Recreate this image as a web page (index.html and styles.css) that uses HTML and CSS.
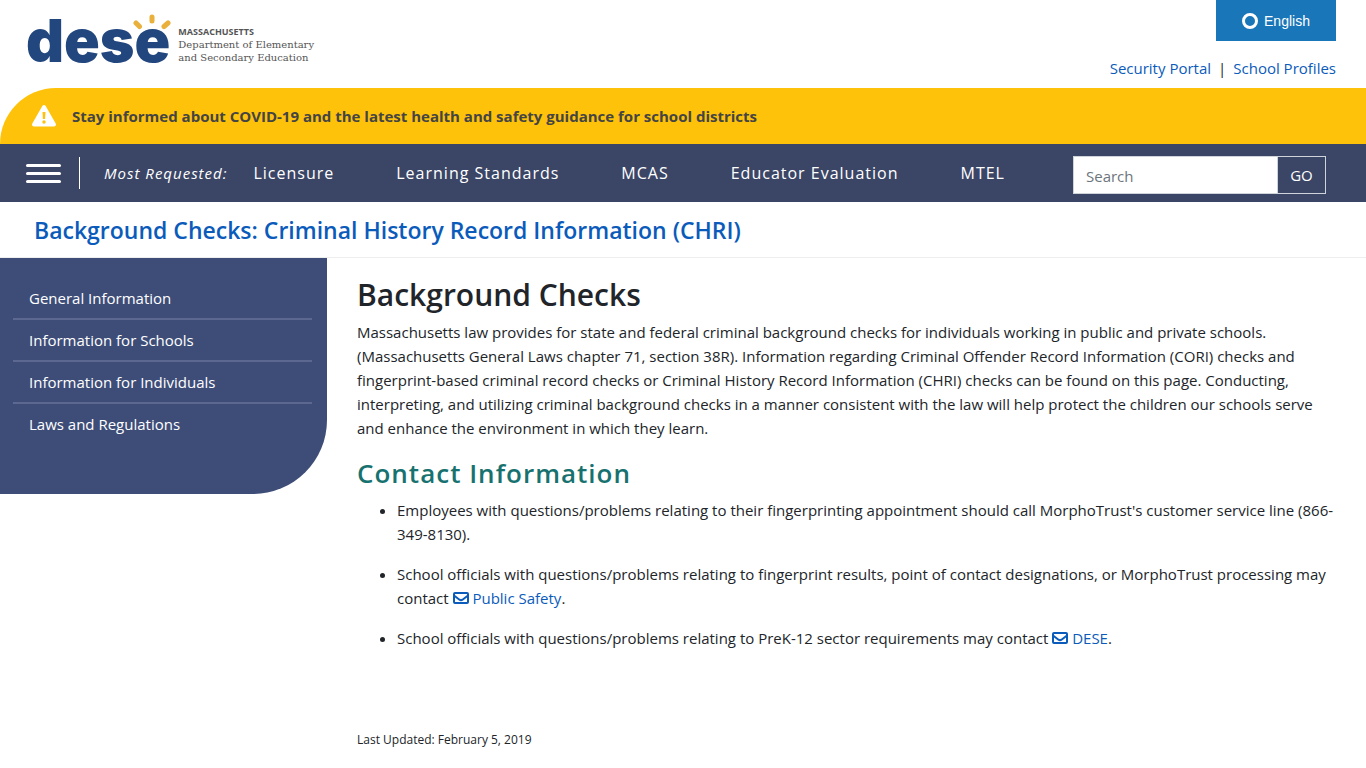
FILE: index.html
```html
<!DOCTYPE html>
<html lang="en">
<head>
<meta charset="utf-8">
<meta name="viewport" content="width=device-width, initial-scale=1">
<title>Background Checks: Criminal History Record Information (CHRI)</title>
<link rel="stylesheet" href="styles.css">
</head>
<body>
<header class="header">
  <a class="logo" href="#">
    <span class="logo-word">dese
      <svg class="logo-rays" viewBox="0 0 38 16" aria-hidden="true"><g stroke="#eab03c" stroke-width="5" stroke-linecap="round"><path d="M3 9l3.500 3.500M19 3v4M35 9l-4 3.500"/></g></svg>
    </span>
    <span class="logo-text"><strong class="logo-state">MASSACHUSETTS</strong><span>Department of Elementary</span><span>and Secondary Education</span></span>
  </a>
  <div class="header-side">
    <button class="language" type="button"><span class="ring"></span>English</button>
    <nav class="portal-links" aria-label="Portals"><a href="#">Security Portal</a><span>|</span><a href="#">School Profiles</a></nav>
  </div>
</header>
<div class="alert">
  <svg class="alert-icon" viewBox="0 0 24 22" aria-hidden="true"><path fill="#fff" d="M10.300 1c.8-1.300 2.600-1.300 3.400 0l10 17.500c.8 1.400-.2 3-1.700 3H2c-1.500 0-2.500-1.600-1.700-3z"/><path fill="#ffc20a" d="M10.500 7h3l-.4 7h-2.200z"/><circle cx="12" cy="17" r="1.700" fill="#ffc20a"/></svg>
  <a class="alert-link" href="#">Stay informed about COVID-19 and the latest health and safety guidance for school districts</a>
</div>
<div class="navbar">
  <button class="menu" type="button" aria-label="Menu"><span></span><span></span><span></span></button>
  <em class="requested">Most Requested:</em>
  <nav class="nav-links" aria-label="Most requested"><a href="#">Licensure</a><a href="#">Learning Standards</a><a href="#">MCAS</a><a href="#">Educator Evaluation</a><a href="#">MTEL</a></nav>
  <form class="search"><input class="search-box" type="text" placeholder="Search" aria-label="Search"><button class="go" type="button">GO</button></form>
</div>
<div class="section-title"><a href="#">Background Checks: Criminal History Record Information (CHRI)</a></div>
<div class="layout">
  <nav class="sidebar" aria-label="Section">
    <a href="#">General Information</a>
    <a href="#">Information for Schools</a>
    <a href="#">Information for Individuals</a>
    <a href="#">Laws and Regulations</a>
  </nav>
  <main class="content">
    <h1>Background Checks</h1>
    <p class="intro">Massachusetts law provides for state and federal criminal background checks for individuals working in public and private schools. (Massachusetts General Laws chapter 71, section 38R). Information regarding Criminal Offender Record Information (CORI) checks and fingerprint-based criminal record checks or Criminal History Record Information (CHRI) checks can be found on this page. Conducting, interpreting, and utilizing criminal background checks in a manner consistent with the law will help protect the children our schools serve and enhance the environment in which they learn.</p>
    <h2>Contact Information</h2>
    <ul class="contacts">
      <li>Employees with questions/problems relating to their fingerprinting appointment should call MorphoTrust's customer service line (866-349-8130).</li>
      <li>School officials with questions/problems relating to fingerprint results, point of contact designations, or MorphoTrust processing may contact <a href="#"><svg class="mail" viewBox="0 0 16 12" aria-hidden="true"><rect x="1" y="1" width="14" height="10" rx="1"/><path d="M1 3.500l5.500 4.200q1.500 1 3 0L15 3.500"/></svg> Public Safety</a>.</li>
      <li>School officials with questions/problems relating to PreK-12 sector requirements may contact <a href="#"><svg class="mail" viewBox="0 0 16 12" aria-hidden="true"><rect x="1" y="1" width="14" height="10" rx="1"/><path d="M1 3.500l5.500 4.200q1.500 1 3 0L15 3.500"/></svg> DESE</a>.</li>
    </ul>
    <p class="updated">Last Updated: February 5, 2019</p>
  </main>
</div>
</body>
</html>
```
FILE: styles.css
```css
* { box-sizing: border-box; }
body { margin: 0; background: #fff; color: #212529; font: 15px/24px "Open Sans", "Noto Sans", sans-serif; }
a { color: #0b5bbb; text-decoration: none; }
button { font: inherit; cursor: pointer; }

.header { display: flex; justify-content: space-between; height: 88px; padding: 0 30px 0 26px; }
.logo { display: flex; gap: 8px; color: #555; }
.logo-word { position: relative; height: 82px; color: #22477f; font: 900 59px/82px Inter, sans-serif; }
.logo-rays { position: absolute; right: -1px; top: 14px; width: 38px; height: 16px; fill: none; }
.logo-text { display: flex; flex-direction: column; padding-top: 25px; font: 10px/13px "DejaVu Serif", serif; }
.logo-state { font: 700 9px/13px "Open Sans", sans-serif; }
.header-side { display: flex; flex-direction: column; align-items: flex-end; gap: 15px; }
.language { display: flex; align-items: center; justify-content: center; gap: 6px; width: 120px; height: 41px; padding: 0; border: 0; background: #1976b9; color: #fff; font: 14px/20px "Liberation Sans", Arial, sans-serif; }
.ring { width: 16px; height: 16px; border: 3px solid #fff; border-radius: 50%; }
.portal-links { display: flex; gap: 7px; }

.alert { display: flex; align-items: center; gap: 16px; height: 56px; padding: 0 32px; background: #ffc20a; border-top-left-radius: 56px; }
.alert-icon { width: 24px; height: 22px; }
.alert-link { color: #444; font-weight: 700; }

.navbar { display: flex; align-items: center; height: 58px; padding: 0 40px 0 26px; background: #3b4566; color: #fff; letter-spacing: 1px; }
.menu { display: flex; flex-direction: column; justify-content: center; gap: 5px; width: 54px; height: 32px; padding: 0 18px 0 0; border: 0; border-right: 1px solid #fff; background: none; }
.menu span { height: 3px; border-radius: 2px; background: #fff; }
.requested { margin: 0 26px 0 24px; }
.nav-links { display: flex; gap: 62px; font-size: 16px; }
.nav-links a { color: #fff; }
.search { display: flex; width: 253px; height: 38px; margin: 4px 0 0 auto; letter-spacing: normal; }
.search-box { flex: 1; min-width: 0; padding: 2px 12px 0; border: 1px solid #ced4da; border-radius: 0; font: inherit; }
.search-box::placeholder { color: #6c757d; opacity: 1; }
.go { width: 48px; padding: 0; border: 1px solid #ced4da; border-left: 0; background: #3b4566; color: #fff; }

.section-title { padding: 14px 34px 13px; border-bottom: 1px solid #eee; font-size: 23px; line-height: 28px; font-weight: 600; }
.layout { display: flex; align-items: flex-start; }
.sidebar { flex: 0 0 327px; height: 236px; padding: 20px 15px 0 13px; background: #3e4d78; border-bottom-right-radius: 74px; }
.sidebar a { display: block; height: 42px; padding: 8px 16px; border-bottom: 2px solid #5c6890; color: #fff; }
.sidebar a:last-child { border-bottom: 0; }
.content { flex: 1; padding: 20px 24px 15px 30px; }
h1 { margin: 0 0 8px; font-size: 30px; line-height: 34px; font-weight: 600; }
.intro { margin: 0 0 16px; }
h2 { margin: 0 0 8px; color: #17726f; font-size: 26px; line-height: 34px; font-weight: 600; letter-spacing: 1px; }
.contacts { margin: 0; padding-left: 40px; }
.contacts li { margin-bottom: 16px; }
.mail { width: 16px; height: 12px; fill: none; stroke: #0b5bbb; stroke-width: 2px; }
.updated { margin: 78px 0 0; font-size: 12px; }
```
